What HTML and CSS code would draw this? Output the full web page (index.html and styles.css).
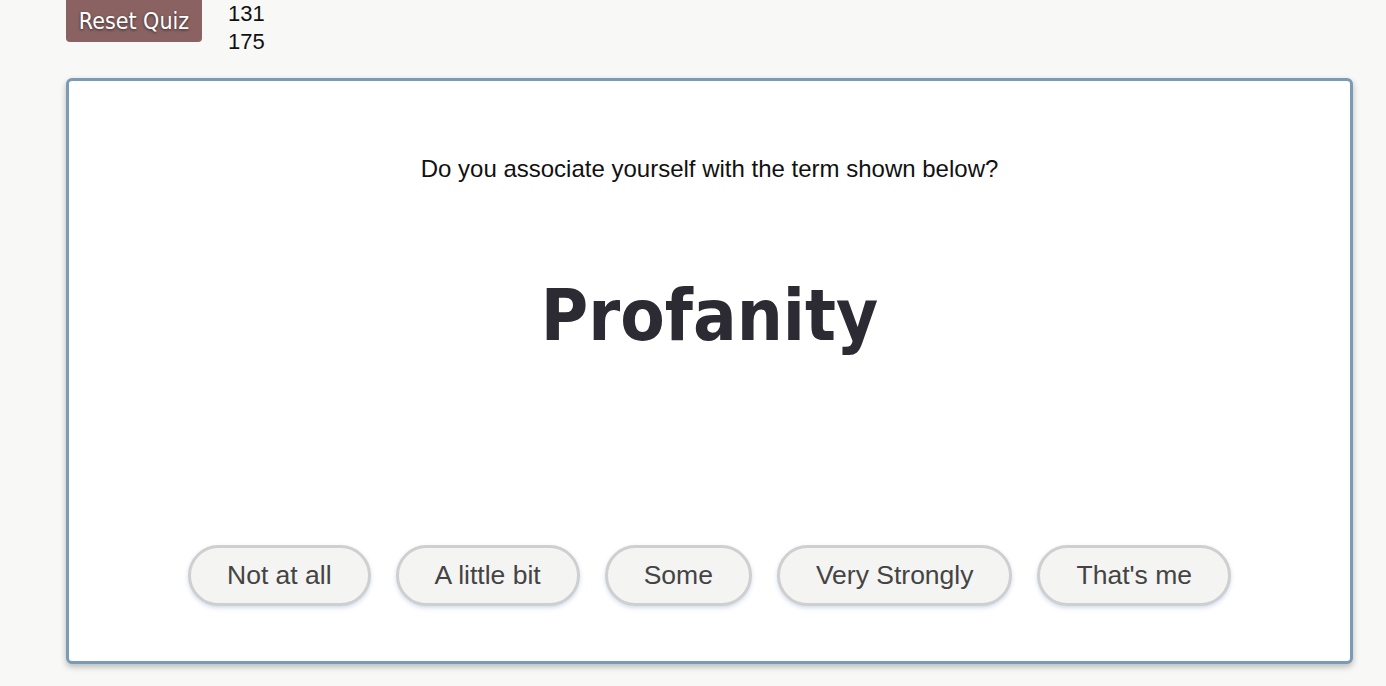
FILE: index.html
```html
<!DOCTYPE html>
<html>
<head>
<meta charset="utf-8">
<link rel="stylesheet" href="styles.css">
</head>
<body>
<div class="top">
  <button class="reset">Reset Quiz</button>
  <div class="counts"><div>131</div><div>175</div></div>
</div>
<div class="card">
  <p class="question">Do you associate yourself with the term shown below?</p>
  <h1 class="term">Profanity</h1>
  <div class="answers">
    <button class="ans">Not at all</button>
    <button class="ans">A little bit</button>
    <button class="ans">Some</button>
    <button class="ans">Very Strongly</button>
    <button class="ans">That's me</button>
  </div>
</div>
</body>
</html>
```
FILE: styles.css
```css
html, body { margin: 0; padding: 0; }
body {
  background: #f8f8f6;
  font-family: "Liberation Sans", Arial, sans-serif;
  width: 1386px;
  height: 686px;
  overflow: hidden;
}
.top {
  display: flex;
  align-items: flex-start;
  padding-left: 66px;
  height: 78px;
}
.reset {
  margin-top: -4px;
  height: 46px;
  padding: 4px 12px 0;
  width: 136px;
  border: none;
  border-radius: 4px;
  background: #8a6262;
  color: #fff;
  font-family: "DejaVu Sans Condensed", "DejaVu Sans", sans-serif;
  font-size: 23px;
  text-shadow: 0 1px 3px rgba(0,0,0,0.6);
}
.counts {
  margin-left: 26px;
  font-size: 22px;
  line-height: 28px;
  color: #111;
}
.card {
  margin-left: 66px;
  width: 1281px;
  height: 580px;
  background: #fff;
  border: 3px solid #7a9bb5;
  border-radius: 6px;
  box-shadow: 0 3px 6px rgba(0,0,0,0.25);
  display: flex;
  flex-direction: column;
  align-items: center;
}
.question {
  margin: 74px 0 0;
  font-size: 24px;
  line-height: 28px;
  color: #111;
}
.term {
  margin: 92px 0 0;
  font-family: "DejaVu Sans Condensed", "DejaVu Sans", sans-serif;
  font-weight: bold;
  font-size: 72px;
  line-height: 80px;
  color: #2c2a32;
}
.answers {
  margin-top: auto;
  margin-bottom: 55px;
  display: flex;
  gap: 25px;
}
.ans {
  height: 61px;
  padding: 0 36px;
  border: 3px solid #cfcfcf;
  border-radius: 31px;
  background: #f4f4f2;
  color: #444;
  font-family: "Liberation Sans", Arial, sans-serif;
  font-size: 26.5px;
  box-shadow: 0 2px 4px rgba(110,140,200,0.3);
}
```
